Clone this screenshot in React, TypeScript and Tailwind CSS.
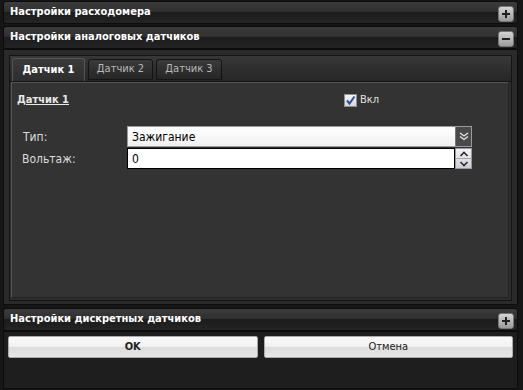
import React from "react";

const font = { fontFamily: '"DejaVu Sans Condensed", "DejaVu Sans", Tahoma, sans-serif' };

function ToggleBtn({ open }: { open?: boolean }) {
  return (
    <div className="flex h-[16px] w-[16px] items-center justify-center rounded-[3px] border border-[#777] bg-gradient-to-b from-[#d4d4d4] to-[#9c9c9c]">
      <svg width="10" height="10" viewBox="0 0 10 10">
        <rect x="1" y="4" width="8" height="2" fill="#222" />
        {!open && <rect x="4" y="1" width="2" height="8" fill="#222" />}
      </svg>
    </div>
  );
}

function SectionHeader({ title, open }: { title: string; open?: boolean }) {
  return (
    <div className="flex h-[23px] items-center rounded-[3px] border border-[#0c0c0c] bg-[linear-gradient(#3c3c3c,#2e2e2e_50%,#1c1c1c_50%,#242424)] pl-[6px] pr-[3px]">
      <span className="flex-1 text-[11px] font-bold text-white">{title}</span>
      <div className="mt-[3px]">
        <ToggleBtn open={open} />
      </div>
    </div>
  );
}

export default function App() {
  return (
    <div className="h-[390px] w-[523px] overflow-hidden bg-[#161616] pl-[3px] pr-[5px] pt-[1px]" style={font}>
      <div className="flex flex-col gap-[2px]">
        <SectionHeader title="Настройки расходомера" />
        <SectionHeader title="Настройки аналоговых датчиков" open />

        <div className="-mt-[2px] h-[256px] border border-[#0c0c0c] bg-[#2a2a2a] px-[5px] pt-[5px]">
          <div className="flex h-[246px] flex-col border border-[#141414] bg-[#2e2e2e]">
            <div className="flex h-[26px] items-end gap-[3px] border-b border-[#141414] bg-[linear-gradient(#383838,#262626)] px-[2px]">
              <div className="flex h-[23px] w-[73px] items-center justify-center rounded-t-[3px] border border-b-0 border-[#555] bg-[linear-gradient(#3a3a3a,#2e2e2e)] text-[11px] font-bold text-white">
                Датчик 1
              </div>
              <div className="mb-[1px] flex h-[21px] w-[65px] items-center justify-center rounded-t-[3px] border border-[#141414] bg-[linear-gradient(#3a3a3a,#262626)] text-[11px] text-[#b8b8b8]">
                Датчик 2
              </div>
              <div className="mb-[1px] flex h-[21px] w-[66px] items-center justify-center rounded-t-[3px] border border-[#141414] bg-[linear-gradient(#3a3a3a,#262626)] text-[11px] text-[#b8b8b8]">
                Датчик 3
              </div>
            </div>
            <div className="mx-[1px] mb-[2px] mr-[2px] flex-1 border border-[#555] border-r-[#222] border-b-[#222] bg-[#333] pl-[5px] pt-[9px]">
              <div className="flex h-[16px] items-center">
                <span className="w-[327px] text-[11px] font-bold text-[#e8e8e8]">
                  <span className="underline">Датчик 1</span>
                </span>
                <div className="flex items-center gap-[3px]">
                  <div className="flex h-[13px] w-[13px] items-center justify-center border border-[#8f8f8f] bg-gradient-to-b from-[#f4f4f4] to-[#d6d6d6]">
                    <svg width="11" height="11" viewBox="0 0 11 11">
                      <path d="M2 5.5 L4.5 8.5 L9.5 1.5" stroke="#2b4fa8" strokeWidth="2" fill="none" />
                    </svg>
                  </div>
                  <span className="text-[11px] text-[#e0e0e0]">Вкл</span>
                </div>
              </div>

              <div className="mt-[18px] flex items-center">
                <span className="w-[110px] pl-[6px] text-[12px] text-[#dcdcdc]">Тип:</span>
                <div className="flex h-[21px] w-[345px] border border-[#9a9a9a]">
                  <div className="flex flex-1 items-center bg-[linear-gradient(#ffffff,#f0f0f0)] pl-[4px] text-[12px] text-black">
                    Зажигание
                  </div>
                  <div className="flex w-[16px] items-center justify-center border-l border-[#777] bg-[#4a4a4a]">
                    <svg width="10" height="9" viewBox="0 0 10 9">
                      <path d="M1 1 L5 4 L9 1 M1 4.5 L5 7.5 L9 4.5" stroke="#e8e8e8" strokeWidth="1.3" fill="none" />
                    </svg>
                  </div>
                </div>
              </div>

              <div className="mt-[1px] flex items-center">
                <span className="w-[110px] pl-[5px] text-[12px] text-[#dcdcdc]">Вольтаж:</span>
                <div className="flex h-[21px] w-[345px]">
                  <div className="flex flex-1 items-center border border-black bg-white pl-[4px] text-[12px] text-black">
                    0
                  </div>
                  <div className="flex w-[17px] flex-col border border-[#999] bg-[linear-gradient(#f2f2f2,#d0d0d0)]">
                    <div className="flex flex-1 items-center justify-center border-b border-[#aaa]">
                      <svg width="10" height="6" viewBox="0 0 10 6">
                        <path d="M1.5 5 L5 1.5 L8.5 5" stroke="#1e2f4a" strokeWidth="1.6" fill="none" />
                      </svg>
                    </div>
                    <div className="flex flex-1 items-center justify-center">
                      <svg width="10" height="6" viewBox="0 0 10 6">
                        <path d="M1.5 1 L5 4.5 L8.5 1" stroke="#1e2f4a" strokeWidth="1.6" fill="none" />
                      </svg>
                    </div>
                  </div>
                </div>
              </div>
            </div>
          </div>
        </div>

        <div className="mt-[1px]">
          <SectionHeader title="Настройки дискретных датчиков" />
        </div>

        <div className="-mt-[2px] flex h-[58px] gap-[6px] border border-[#0c0c0c] bg-[#1e1e1e] px-[4px] pt-[4px]">
          <button className="flex h-[22px] flex-1 items-center justify-center rounded-[2px] border border-[#aaa] bg-[linear-gradient(#fafafa,#f0f0f0_50%,#dcdcdc_50%,#e6e6e6)] text-[11px] font-bold text-[#222]">
            OK
          </button>
          <button className="flex h-[22px] flex-1 items-center justify-center rounded-[2px] border border-[#aaa] bg-[linear-gradient(#fafafa,#f0f0f0_50%,#dcdcdc_50%,#e6e6e6)] text-[11px] text-[#222]">
            Отмена
          </button>
        </div>
      </div>
    </div>
  );
}
